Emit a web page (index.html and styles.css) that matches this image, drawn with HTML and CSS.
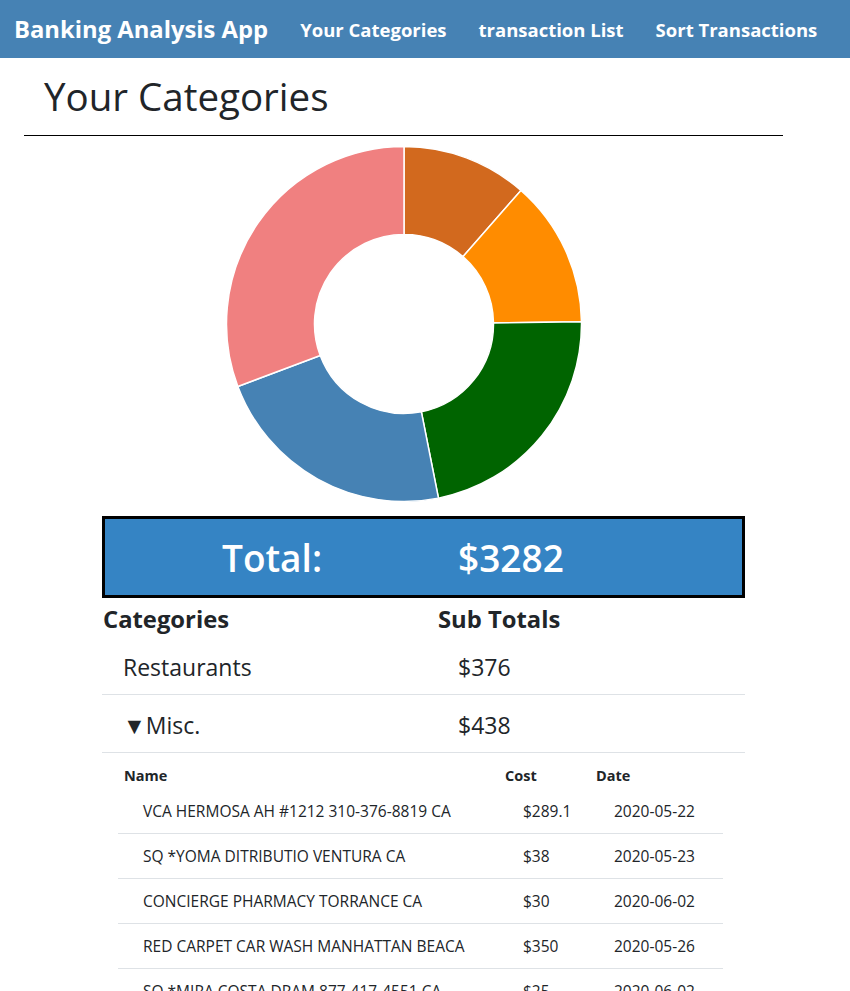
FILE: index.html
```html
<!DOCTYPE html>
<html lang="en">
<head>
  <meta charset="UTF-8" />
  <meta name="viewport" content="width=device-width, initial-scale=1.0"/>
  <title>Banking Analysis App</title>
  <link rel="stylesheet" href="styles.css">
</head>
<body>
  <nav id="navbar">
    <a class="brand" href="#">Banking Analysis App</a>
    <a class="nav-link" href="#">Your Categories</a>
    <a class="nav-link" href="#">transaction List</a>
    <a class="nav-link" href="#">Sort Transactions</a>
  </nav>

  <div id="page">
    <h1>Your Categories</h1>
    <hr>

    <div id="chart">
      <svg width="360" height="360" viewBox="0 0 360 360">
        <g stroke="#fff" stroke-width="1.5">
          <path fill="#d2691e" d="M180 2.5 A177.5 177.5 0 0 1 296.92 46.45 L238.95 112.66 A89.5 89.5 0 0 0 180 90.5 Z"/>
          <path fill="#ff8c00" d="M296.92 46.45 A177.5 177.5 0 0 1 357.49 177.83 L269.49 178.91 A89.5 89.5 0 0 0 238.95 112.66 Z"/>
          <path fill="#006400" d="M357.49 177.83 A177.5 177.5 0 0 1 214.47 354.13 L197.38 267.8 A89.5 89.5 0 0 0 269.49 178.91 Z"/>
          <path fill="#4682b4" d="M214.47 354.13 A177.5 177.5 0 0 1 13.84 242.44 L96.22 211.49 A89.5 89.5 0 0 0 197.38 267.8 Z"/>
          <path fill="#f08080" d="M13.84 242.44 A177.5 177.5 0 0 1 180 2.5 L180 90.5 A89.5 89.5 0 0 0 96.22 211.49 Z"/>
        </g>
      </svg>
    </div>

    <div id="summary">
      <div id="total">
        <span>Total:</span>
        <span>$3282</span>
      </div>

      <table class="categories">
        <thead>
          <tr><th class="cat-col">Categories</th><th>Sub Totals</th></tr>
        </thead>
        <tbody>
          <tr class="cat-row"><td>Restaurants</td><td>$376</td></tr>
          <tr class="cat-row open"><td>&#9660;Misc.</td><td>$438</td></tr>
          <tr class="detail-row">
            <td colspan="2">
              <table class="transactions">
                <thead>
                  <tr><th class="name-col">Name</th><th class="cost-col">Cost</th><th>Date</th></tr>
                </thead>
                <tbody>
                  <tr><td>VCA HERMOSA AH #1212 310-376-8819 CA</td><td>$289.1</td><td>2020-05-22</td></tr>
                  <tr><td>SQ *YOMA DITRIBUTIO VENTURA CA</td><td>$38</td><td>2020-05-23</td></tr>
                  <tr><td>CONCIERGE PHARMACY TORRANCE CA</td><td>$30</td><td>2020-06-02</td></tr>
                  <tr><td>RED CARPET CAR WASH MANHATTAN BEACA</td><td>$350</td><td>2020-05-26</td></tr>
                  <tr><td>SQ *MIRA COSTA DRAM 877-417-4551 CA</td><td>$25</td><td>2020-06-02</td></tr>
                </tbody>
              </table>
            </td>
          </tr>
        </tbody>
      </table>
    </div>
  </div>
</body>
</html>
```

FILE: styles.css
```css
body {
  font-family: "Open Sans", "Noto Sans", sans-serif;
  margin: 0;
  padding: 0;
  color: #212529;
  background: #fff;
}
#navbar {
  display: flex;
  align-items: center;
  gap: 32px;
  height: 58px;
  padding: 0 14px;
  background-color: #4682b4;
  white-space: nowrap;
}
#navbar a {
  color: #fff;
  text-decoration: none;
  font-weight: 700;
}
.brand {
  font-size: 23.8px;
}
.nav-link {
  font-size: 18.5px;
}
#page {
  margin-left: 24px;
  width: 759px;
}
h1 {
  font-size: 38.5px;
  font-weight: 500;
  margin: 0;
  padding: 14px 0 0 20px;
  line-height: 48px;
}
hr {
  margin: 15px 0 0;
  border: none;
  border-top: 1px solid #000;
}
#chart {
  display: flex;
  justify-content: center;
  margin-top: 8px;
}
#chart svg {
  display: block;
}
#summary {
  margin-left: 78px;
  width: 643px;
  margin-top: 12px;
}
#total {
  display: flex;
  gap: 136px;
  align-items: center;
  height: 76px;
  padding-left: 117px;
  border: 3px solid #000;
  background-color: #3584c4;
  color: #fff;
  font-size: 37px;
  font-weight: 600;
}
table {
  border-collapse: collapse;
  width: 100%;
}
.categories th {
  text-align: left;
  font-size: 23.8px;
  font-weight: 700;
  line-height: 32px;
  padding: 5px 0 5px 1px;
}
.cat-col {
  width: 334px;
}
.cat-row td {
  font-size: 23px;
  line-height: 29px;
  padding: 13px 0 12px 21px;
  border-bottom: 1px solid #dee2e6;
}
.cat-row.open td {
  padding: 16px 0 12px 21px;
}
.detail-row > td {
  padding: 12px 22px 0 16px;
}
.transactions th {
  text-align: left;
  font-size: 14.5px;
  font-weight: 700;
  line-height: 22px;
  padding: 0 0 2px 6px;
}
.name-col {
  width: 375px;
}
.cost-col {
  width: 85px;
}
.transactions td {
  font-size: 15.5px;
  line-height: 22px;
  padding: 11px 0 11px 25px;
  border-bottom: 1px solid #dee2e6;
  white-space: nowrap;
}
.transactions td + td {
  padding-left: 24px;
}
```
